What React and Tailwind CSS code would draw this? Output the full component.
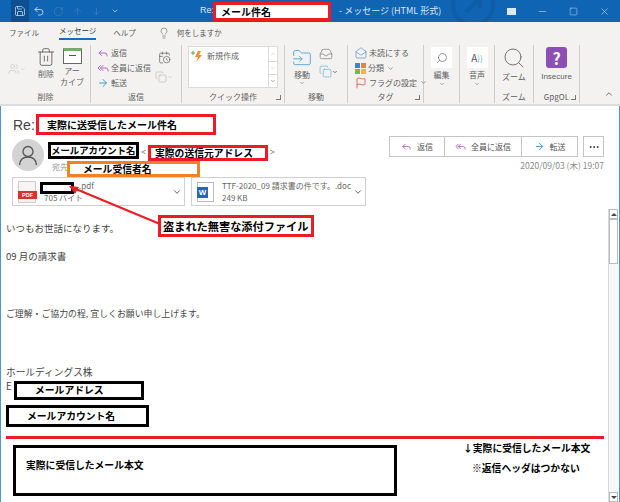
import React from 'react'
import { Save, Undo2, RotateCw, ArrowUp, ArrowDown, Minus, Square, X, Lightbulb, Trash2, Reply, ReplyAll, ArrowRight, Search, ChevronDown, ChevronUp, MoreHorizontal, Users, CalendarClock, Copy, MailOpen, Flag, FolderInput, Inbox } from 'lucide-react'

const font = { fontFamily: '"Noto Sans CJK JP", "Liberation Sans", sans-serif' }

function Group({ width, label, launcher, children }) {
  return (
    <div className={`${width} relative flex h-[58px] shrink-0 flex-col border-r border-[#cfcdcb]`}>
      <div className="flex min-h-0 flex-1">{children}</div>
      <div className="h-[13px] text-center text-[8px] leading-[13px] whitespace-nowrap text-[#5f5f5f]">{label}</div>
      {launcher && <div className="absolute right-[3px] bottom-[3px] h-[5px] w-[5px] border-b border-r border-[#777]" />}
    </div>
  )
}

function TallButton({ children, label, className = 'w-[32px]' }) {
  return (
    <div className={`${className} flex flex-col items-center text-[8px] leading-[11px] text-[#5f5f5f]`}>
      {children}
      <span className="mt-[1px] text-center whitespace-nowrap">{label}</span>
    </div>
  )
}

function Row({ icon, label, arrow }) {
  return (
    <div className="flex h-[16px] items-center gap-[2px] text-[8px] whitespace-nowrap text-[#5f5f5f]">
      {icon}
      <span>{label}</span>
      {arrow && <ChevronDown size={7} className="ml-[1px]" />}
    </div>
  )
}

function Ribbon() {
  return (
    <div className="flex h-[63px] border-b-2 border-[#dcdcdc] bg-[#f3f2f1] pt-[2px] pl-[1px]">
      <Group width="w-[90px]" label="削除">
        <div className="flex w-[34px] items-start pt-[18px] pl-[7px] text-[#c2c2c2]">
          <Users size={12} strokeWidth={1.2} />
          <ChevronDown size={6} className="mt-[3px]" />
        </div>
        <TallButton label="削除" className="w-[22px] pt-[2px]">
          <Trash2 size={20} strokeWidth={1} className="text-[#555]" />
        </TallButton>
        <TallButton label={<>アー<br />カイブ</>} className="w-[30px] pt-[3px]">
          <div className="h-[16px] w-[19px] border border-[#666] border-t-[3px] border-t-[#70ad6c] bg-white">
            <div className="mx-auto mt-[4px] h-px w-[7px] bg-[#555]" />
          </div>
        </TallButton>
      </Group>
      <Group width="w-[91px]" label="返信">
        <div className="flex w-[60px] flex-col pt-[1px] pl-[6px]">
          <Row icon={<Reply size={12} className="text-[#b768c9]" />} label="返信" />
          <Row icon={<ReplyAll size={12} className="text-[#b768c9]" />} label="全員に返信" />
          <Row icon={<ArrowRight size={12} className="text-[#3c9fd8]" />} label="転送" />
        </div>
        <div className="flex flex-col items-center gap-[7px] pt-[6px] pl-[4px]">
          <CalendarClock size={13} strokeWidth={1.2} className="text-[#555]" />
          <div className="flex items-center text-[#b5b5b5]">
            <Copy size={12} strokeWidth={1.2} />
            <ChevronDown size={6} />
          </div>
        </div>
      </Group>
      <Group width="w-[103px]" label="クイック操作" launcher>
        <div className="mt-[1px] ml-[6px] flex h-[42px] w-[90px] border border-[#dcdbda] bg-white">
          <div className="flex flex-1 items-start gap-[3px] pt-[3px] pl-[2px] text-[8px] text-[#5f5f5f]">
            <svg width="13" height="13" viewBox="0 0 13 13">
              <path d="M7 1 L4 7 H7 L5 12 L11 5 H8 L10 1 Z" fill="#f0922e" />
              <path d="M2 1 V5 M0 3 H4" stroke="#4caf50" strokeWidth="1" />
            </svg>
            <span>新規作成</span>
          </div>
          <div className="flex w-[9px] flex-col border-l border-[#dcdbda] text-[#bbb]">
            <div className="flex h-[14px] items-center justify-center"><ChevronUp size={6} /></div>
            <div className="flex h-[14px] items-center justify-center border-y border-[#dcdbda]"><ChevronDown size={6} /></div>
            <div className="flex flex-1 items-center justify-center text-[#555]"><ChevronDown size={6} /></div>
          </div>
        </div>
      </Group>
      <Group width="w-[63px]" label="移動">
        <TallButton label="移動" className="w-[34px] pt-[3px]">
          <FolderInput size={20} strokeWidth={1} className="text-[#3c9fd8]" />
          <ChevronDown size={6} className="order-last" />
        </TallButton>
        <div className="flex flex-col pt-[2px]">
          <Inbox size={14} strokeWidth={1} className="mb-[2px] text-[#666]" />
          <div className="mt-[2px] flex items-center">
            <Copy size={13} strokeWidth={1} className="text-[#3c9fd8]" />
            <ChevronDown size={6} />
          </div>
        </div>
      </Group>
      <Group width="w-[76px]" label="タグ" launcher>
        <div className="flex flex-col pt-[1px] pl-[7px]">
          <Row icon={<MailOpen size={12} strokeWidth={1.2} className="text-[#3c7fb8]" />} label="未読にする" />
          <Row
            icon={
              <div className="grid h-[11px] w-[11px] grid-cols-2 gap-px">
                <span className="bg-[#3a87c9]" /><span className="bg-[#e8862e]" />
                <span className="bg-[#7cb35b]" /><span className="bg-[#f2b53c]" />
              </div>
            }
            label="分類"
            arrow
          />
          <Row icon={<Flag size={12} strokeWidth={1.4} className="text-[#d8382f]" />} label="フラグの設定" arrow />
        </div>
      </Group>
      <Group width="w-[36px]" label="">
        <TallButton label="編集" className="w-full pt-[2px]">
          <div className="flex h-[21px] w-[21px] items-center justify-center bg-white">
            <Search size={12} strokeWidth={1.2} className="-scale-x-100 text-[#555]" />
          </div>
          <ChevronDown size={6} className="order-last mt-[1px]" />
        </TallButton>
      </Group>
      <Group width="w-[35px]" label="">
        <TallButton label="音声" className="w-full pt-[2px]">
          <div className="flex h-[21px] w-[21px] items-center justify-center bg-white text-[10px] text-[#555]">
            A<span className="text-[8px] text-[#5aa7dc]">))</span>
          </div>
          <ChevronDown size={6} className="order-last mt-[1px]" />
        </TallButton>
      </Group>
      <Group width="w-[39px]" label="ズーム">
        <TallButton label="ズーム" className="w-full pt-[1px]">
          <Search size={24} strokeWidth={0.9} className="text-[#666]" />
        </TallButton>
      </Group>
      <Group width="w-[46px]" label="GpgOL" launcher>
        <div className="flex w-full flex-col items-center pt-[2px] text-[8px] leading-[12px] text-[#5f5f5f]">
          <div className="flex h-[21px] w-[21px] items-center justify-center rounded-[3px] bg-[#8b4fb5] text-[16px] leading-none font-bold text-white">?</div>
          <span className="mt-[3px]" style={{ fontFamily: '"Liberation Sans", sans-serif' }}>Insecure</span>
        </div>
      </Group>
      <div className="flex flex-1 items-end justify-end pr-[6px] pb-[5px]">
        <ChevronUp size={10} className="text-[#555]" />
      </div>
    </div>
  )
}

function Attachment({ width, icon, name, size, children }) {
  return (
    <div className={`${width} flex h-[29px] items-center border border-[#d0d0d0] bg-white pl-[5px]`}>
      {icon}
      <div className="flex-1 pl-[8px] text-[8px] leading-[12px] whitespace-nowrap text-[#666]">
        <div>{name}</div>
        <div>{size}</div>
      </div>
      {children}
    </div>
  )
}

function ActionButton({ icon, label, width }) {
  return (
    <div className={`${width} flex items-center justify-center gap-[5px] border-r border-[#c4c4c4] text-[8px] whitespace-nowrap text-[#555] last:border-r-0`}>
      {icon}
      <span>{label}</span>
    </div>
  )
}

function Box({ className, children }) {
  return (
    <div className={`absolute flex items-center bg-white font-bold whitespace-nowrap text-black ${className}`}>
      {children}
    </div>
  )
}

export default function App() {
  return (
    <div className="relative h-[502px] w-[620px] overflow-hidden bg-white" style={font}>
      {/* title bar */}
      <div className="relative flex h-[22px] items-center overflow-hidden bg-[#0f64b4] text-[#cfe0f2]">
        <svg className="absolute top-[-10px] left-[440px] opacity-20" width="70" height="50" viewBox="0 0 70 50" fill="none" stroke="#06427f" strokeWidth="4">
          <circle cx="33" cy="15" r="20" />
          <path d="M26 22 L40 8 M30 8 H40 V18" />
        </svg>
        <div className="ml-[11px] flex h-full w-[18px] items-center justify-center bg-[#0d4f91]">
          <Save size={12} strokeWidth={1.4} className="text-[#dbe8f5]" />
        </div>
        <Undo2 size={12} strokeWidth={1.6} className="ml-[4px] text-[#dbe8f5]" />
        <RotateCw size={11} strokeWidth={1.4} className="ml-[8px] text-[#3f83c5]" />
        <ArrowUp size={11} strokeWidth={1.4} className="ml-[8px] text-[#3f83c5]" />
        <ArrowDown size={11} strokeWidth={1.4} className="ml-[8px] text-[#3f83c5]" />
        <ChevronDown size={8} className="ml-[9px] text-[#dbe8f5]" />
        <span className="ml-[81px] text-[9px] text-[#dbe8f5]" style={{ fontFamily: '"Liberation Sans", sans-serif' }}>Re:</span>
        <span className="ml-[125px] text-[9px] text-[#dbe8f5]">- メッセージ (HTML 形式)</span>
        <div className="ml-auto flex items-center gap-[21px] pr-[10px] text-[#dbe8f5]">
          <div className="h-[7px] w-[9px] bg-[#dbe8f5]" />
          <Minus size={11} strokeWidth={1.2} />
          <Square size={9} strokeWidth={1.2} />
          <X size={11} strokeWidth={1.2} />
        </div>
      </div>

      {/* tabs */}
      <div className="flex h-[21px] items-center bg-[#f3f2f1] pl-[9px] text-[7.5px] text-[#555]">
        <span>ファイル</span>
        <span className="ml-[20px] border-b-2 border-[#1a6cb5] pb-[2px] text-[#333]">メッセージ</span>
        <span className="ml-[17px]">ヘルプ</span>
        <Lightbulb size={12} strokeWidth={1.1} className="ml-[22px]" />
        <span className="ml-[7px]">何をしますか</span>
      </div>

      <Ribbon />

      {/* message */}
      <div className="flex h-[396px] border-x border-[#4f94cf]">
        <div className="min-w-0 flex-1">
          <div className="h-[30px] pt-[9px] pl-[12px] text-[14px] leading-[20px] text-[#444]" style={{ fontFamily: '"Liberation Sans", sans-serif' }}>Re:</div>

          <div className="flex h-[41px] pl-[11px]">
            <div className="mt-[3px] flex h-[32px] w-[32px] items-center justify-center rounded-full bg-[#d3d3d3]">
              <svg width="22" height="22" viewBox="0 0 22 22" fill="none" stroke="#555" strokeWidth="1.3">
                <circle cx="11" cy="7.5" r="5" />
                <path d="M2.5 21 C3 15 7 13 11 13 C15 13 19 15 19.5 21" />
              </svg>
            </div>
            <div className="ml-auto flex flex-col items-end pr-[4px]">
              <div className="flex items-start gap-[5px]">
                <div className="flex h-[21px] w-[189px] border border-[#c4c4c4]">
                  <ActionButton width="w-[55px]" icon={<Reply size={11} className="text-[#b768c9]" />} label="返信" />
                  <ActionButton width="w-[77px]" icon={<ReplyAll size={11} className="text-[#b768c9]" />} label="全員に返信" />
                  <ActionButton width="flex-1" icon={<ArrowRight size={11} className="text-[#3c9fd8]" />} label="転送" />
                </div>
                <div className="flex h-[21px] w-[21px] items-center justify-center border border-[#c4c4c4]">
                  <MoreHorizontal size={12} className="text-[#333]" />
                </div>
              </div>
              <div className="mt-[1px] text-[8.5px] leading-[14px] text-[#8a8a8a]">2020/09/03 (木) 19:07</div>
            </div>
          </div>

          <div className="flex h-[11px] pl-[51px] text-[8px] leading-[11px] text-[#999]">
            <span className="-mt-[16px]">宛先</span>
          </div>

          <div className="-mt-[11px] flex gap-[6px] pl-[11px]">
            <Attachment
              width="w-[173px]"
              name={<span className="pl-[35px]">.pdf</span>}
              size="705 バイト"
              icon={
                <div className="relative h-[22px] w-[18px] border border-[#ccc] bg-[#f5f5f5]">
                  <div className="absolute top-[9px] left-[-1px] w-[19px] bg-[#d9322e] text-center text-[5.5px] leading-[8px] font-bold text-white" style={{ fontFamily: '"Liberation Sans", sans-serif' }}>PDF</div>
                </div>
              }
            >
              <ChevronDown size={10} className="mr-[2px] text-[#444]" />
            </Attachment>
            <Attachment
              width="w-[175px]"
              name="TTF-2020_09 請求書の件です。.doc"
              size="249 KB"
              icon={
                <div className="relative h-[20px] w-[17px] border border-[#bbb] bg-white">
                  <div className="absolute top-[4px] left-[-1px] h-[11px] w-[11px] bg-[#2b65b8] text-center text-[8px] leading-[11px] font-bold text-white" style={{ fontFamily: '"Liberation Sans", sans-serif' }}>W</div>
                </div>
              }
            >
              <ChevronDown size={10} className="mr-[2px] text-[#444]" />
            </Attachment>
          </div>

          <div className="pt-[14px] pl-[5px] text-[#444]">
            <p className="h-[28px] text-[9.5px] leading-[16px]">いつもお世話になります。</p>
            <p className="h-[58px] text-[9.5px] leading-[16px]">09 月の請求書</p>
            <p className="h-[59px] text-[8.9px] leading-[16px]">ご理解・ご協力の程, 宜しくお願い申し上げます。</p>
            <p className="h-[14px] text-[9.7px] leading-[14px]">ホールディングス株</p>
            <p className="text-[9.7px] leading-[14px]">E</p>
          </div>
        </div>

        {/* scrollbar */}
        <div className="mt-[103px] mr-[1px] flex w-[10px] flex-col border-l border-[#d8d8d8] bg-[#f7f7f7]">
          <div className="flex h-[10px] items-center justify-center border border-[#bbb] bg-white"><div className="h-0 w-0 border-x-[3px] border-b-[3px] border-x-transparent border-b-[#444]" /></div>
          <div className="h-[45px] border border-[#bbb] bg-white" />
          <div className="flex-1" />
          <div className="flex h-[10px] items-center justify-center border border-[#bbb] bg-white"><div className="h-0 w-0 border-x-[3px] border-t-[3px] border-x-transparent border-t-[#444]" /></div>
        </div>
      </div>

      {/* annotations drawn over the capture */}
      <Box className="top-[2px] left-[213px] h-[19px] w-[118px] border-[3px] border-[#ed1c24] pl-[5px] text-[10px]">メール件名</Box>
      <Box className="top-[114px] left-[36px] h-[21px] w-[180px] border-[3px] border-[#ed1c24] pl-[8px] text-[10px]">実際に送受信したメール件名</Box>
      <Box className="top-[142px] left-[48px] h-[17px] w-[91px] border-[3px] border-black text-[9.4px]">メールアカウント名</Box>
      <span className="absolute top-[146px] left-[141px] text-[9px] leading-[12px] text-[#777]">&lt;</span>
      <Box className="top-[145px] left-[148px] h-[16px] w-[120px] border-[3px] border-[#ed1c24] pl-[4px] text-[9.8px]">実際の送信元アドレス</Box>
      <span className="absolute top-[146px] left-[270px] text-[9px] leading-[12px] text-[#777]">&gt;</span>
      <Box className="top-[161px] left-[67px] h-[16px] w-[133px] border-[3px] border-[#f58220] pl-[13px] text-[9.8px]">メール受信者名</Box>
      <div className="absolute top-[182px] left-[40px] h-[12px] w-[34px] border-[3px] border-black bg-white" />

      <svg className="pointer-events-none absolute top-0 left-0" width="620" height="502">
        <line x1="71" y1="187" x2="160" y2="224" stroke="#ed1c24" strokeWidth="2" />
        <polygon points="69,186 79,187 75,194" fill="#ed1c24" />
      </svg>
      <Box className="top-[215px] left-[158px] h-[22px] w-[156px] border-[3px] border-[#ed1c24] pl-[2px] text-[11.2px]">盗まれた無害な添付ファイル</Box>

      <Box className="top-[381px] left-[14px] h-[19px] w-[130px] border-[3px] border-black pl-[18px] text-[9.8px]">メールアドレス</Box>
      <Box className="top-[405px] left-[6px] h-[22px] w-[143px] border-[3px] border-black pl-[18px] text-[9.8px]">メールアカウント名</Box>
      <div className="absolute top-[436px] left-[6px] h-[3px] w-[598px] bg-[#ed1c24]" />
      <div className="absolute top-[445px] left-[13px] h-[51px] w-[384px] border-[3px] border-black bg-white pt-[10px] pl-[10px] text-[9.8px] leading-[14px] font-bold text-black">実際に受信したメール本文</div>
      <span className="absolute top-[441px] left-[463px] text-[9.8px] leading-[14px] font-bold text-black">↓実際に受信したメール本文</span>
      <span className="absolute top-[461px] left-[472px] text-[9.8px] leading-[14px] font-bold text-black">※返信ヘッダはつかない</span>
    </div>
  )
}
